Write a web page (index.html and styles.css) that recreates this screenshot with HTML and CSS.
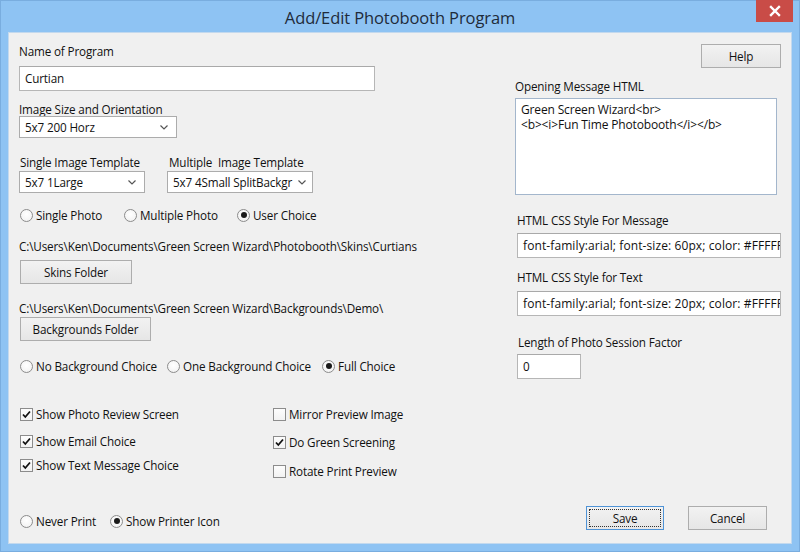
FILE: index.html
```html
<!DOCTYPE html>
<html>
<head>
<meta charset="utf-8">
<title>Add/Edit Photobooth Program</title>
<link rel="stylesheet" href="styles.css">
</head>
<body>
<div class="window">
  <div class="titlebar">
    <div class="title">Add/Edit Photobooth Program</div>
    <div class="close">
      <svg width="12" height="12" viewBox="0 0 12 12"><path d="M2 2 L10 10 M10 2 L2 10" stroke="#fff" stroke-width="2.4" stroke-linecap="square"/></svg>
    </div>
  </div>
  <div class="client">
    <div class="left">
      <div class="label">Name of Program</div>
      <div class="edit name-edit">Curtian</div>

      <div class="label lbl-size">Image Size and Orientation</div>
      <div class="combo combo-size"><span>5x7 200 Horz</span><svg class="chev" width="8" height="5" viewBox="0 0 8 5"><path d="M0.5 0.5 L4 4 L7.5 0.5" fill="none" stroke="#555" stroke-width="1.2"/></svg></div>

      <div class="templates">
        <div class="field f-single">
          <div class="label sub">Single Image Template</div>
          <div class="combo"><span>5x7 1Large</span><svg class="chev" width="8" height="5" viewBox="0 0 8 5"><path d="M0.5 0.5 L4 4 L7.5 0.5" fill="none" stroke="#555" stroke-width="1.2"/></svg></div>
        </div>
        <div class="field f-multi">
          <div class="label sub">Multiple&nbsp; Image Template</div>
          <div class="combo"><span>5x7 4Small SplitBackgr</span><svg class="chev" width="8" height="5" viewBox="0 0 8 5"><path d="M0.5 0.5 L4 4 L7.5 0.5" fill="none" stroke="#555" stroke-width="1.2"/></svg></div>
        </div>
      </div>

      <div class="radios r-photo">
        <div class="opt w104"><span class="radio"></span>Single Photo</div>
        <div class="opt w113"><span class="radio"></span>Multiple Photo</div>
        <div class="opt"><span class="radio on"></span>User Choice</div>
      </div>

      <div class="path p-skins">C:\Users\Ken\Documents\Green Screen Wizard\Photobooth\Skins\Curtians</div>
      <div class="btn b-skins">Skins Folder</div>

      <div class="path p-bg">C:\Users\Ken\Documents\Green Screen Wizard\Backgrounds\Demo\</div>
      <div class="btn b-bg">Backgrounds Folder</div>

      <div class="radios r-bg">
        <div class="opt w147"><span class="radio"></span>No Background Choice</div>
        <div class="opt w155"><span class="radio"></span>One Background Choice</div>
        <div class="opt"><span class="radio on"></span>Full Choice</div>
      </div>

      <div class="checks">
        <div class="ccol ccol-left">
          <div class="opt"><span class="check on"><svg width="11" height="11" viewBox="0 0 11 11"><path d="M2 5.5 L4.3 8 L9 2.5" fill="none" stroke="#111" stroke-width="1.8"/></svg></span>Show Photo Review Screen</div>
          <div class="opt c2"><span class="check on"><svg width="11" height="11" viewBox="0 0 11 11"><path d="M2 5.5 L4.3 8 L9 2.5" fill="none" stroke="#111" stroke-width="1.8"/></svg></span>Show Email Choice</div>
          <div class="opt c3"><span class="check on"><svg width="11" height="11" viewBox="0 0 11 11"><path d="M2 5.5 L4.3 8 L9 2.5" fill="none" stroke="#111" stroke-width="1.8"/></svg></span>Show Text Message Choice</div>
        </div>
        <div class="ccol ccol-right">
          <div class="opt"><span class="check"></span>Mirror Preview Image</div>
          <div class="opt c2r"><span class="check on"><svg width="11" height="11" viewBox="0 0 11 11"><path d="M2 5.5 L4.3 8 L9 2.5" fill="none" stroke="#111" stroke-width="1.8"/></svg></span>Do Green Screening</div>
          <div class="opt c3r"><span class="check"></span>Rotate Print Preview</div>
        </div>
      </div>

      <div class="radios r-print">
        <div class="opt w90"><span class="radio"></span>Never Print</div>
        <div class="opt"><span class="radio on"></span>Show Printer Icon</div>
      </div>
    </div>

    <div class="right">
      <div class="btn b-help">Help</div>
      <div class="label r-lbl1">Opening Message HTML</div>
      <div class="memo">Green Screen Wizard&lt;br&gt;<br>&lt;b&gt;&lt;i&gt;Fun Time Photobooth&lt;/i&gt;&lt;/b&gt;</div>
      <div class="label r-lbl2">HTML CSS Style For Message</div>
      <div class="edit css-edit e1">font-family:arial; font-size: 60px; color: #FFFFFF;</div>
      <div class="label r-lbl3">HTML CSS Style for Text</div>
      <div class="edit css-edit e2">font-family:arial; font-size: 20px; color: #FFFFFF;</div>
      <div class="label r-lbl4">Length of Photo Session Factor</div>
      <div class="edit small-edit">0</div>
      <div class="actions">
        <div class="btn b-save"><span class="focus">Save</span></div>
        <div class="btn b-cancel">Cancel</div>
      </div>
    </div>
  </div>
</div>
</body>
</html>
```

FILE: styles.css
```css
* { box-sizing: border-box; }

html, body {
  margin: 0;
  padding: 0;
  background: #8fc3f2;
}

body {
  font-family: "Open Sans", "Noto Sans", sans-serif;
  font-size: 11.7px;
  letter-spacing: -0.15px;
  color: #111;
}

.window {
  width: 800px;
  height: 552px;
  background: #8ec3f3;
  border: 1px solid #79addf;
  padding: 0 7px 7px 7px;
  display: flex;
  flex-direction: column;
}

.titlebar {
  flex: none;
  height: 31px;
  display: grid;
  grid-template-columns: 1fr auto 1fr;
  align-items: start;
}

.title {
  grid-column: 2;
  font-size: 16.5px;
  line-height: 20px;
  margin-top: 7px;
  color: #1f2b3a;
  letter-spacing: -0.1px;
}

.close {
  grid-column: 3;
  justify-self: end;
  width: 37px;
  height: 22px;
  margin-top: -1px;
  margin-right: -1px;
  background: #c94c47;
  display: flex;
  align-items: center;
  justify-content: center;
}

.client {
  flex: 1;
  min-height: 0;
  background: #f0f0f0;
  border: 1px solid #c3d9ee;
  padding: 11px 10px 13px 10px;
  display: grid;
  grid-template-columns: 496px 266px;
}

.left, .right {
  display: flex;
  flex-direction: column;
  align-items: flex-start;
}

.label {
  line-height: 14px;
  height: 14px;
  white-space: nowrap;
}

.edit {
  background: #fff;
  border: 1px solid #b6b6b6;
  border-top-color: #a9a9a9;
  height: 25px;
  line-height: 23px;
  padding: 0 5px;
  white-space: nowrap;
  overflow: hidden;
}

.name-edit { width: 356px; margin-top: 8px; }

.lbl-size { margin-top: 11px; }

.combo {
  background: #fff;
  border: 1px solid #acacac;
  height: 22px;
  display: flex;
  align-items: center;
  justify-content: space-between;
  padding: 0 8px 0 5px;
  white-space: nowrap;
}
.chev { flex: none; }

.combo-size { width: 158px; }

.templates {
  display: flex;
  gap: 22px;
  margin-top: 17px;
}
.field .combo { margin-top: 2px; }
.sub { padding-left: 1px; }
.f-single .combo { width: 126px; }
.f-multi .combo { width: 146px; padding-right: 6px; }
.f-multi .sub { padding-left: 2px; }

.radios {
  display: flex;
  margin-left: 1px;
}
.opt {
  display: flex;
  align-items: center;
  height: 16px;
  white-space: nowrap;
}
.w104 { width: 104px; }
.w113 { width: 113px; }
.w147 { width: 147px; }
.w155 { width: 155px; }
.w90 { width: 90px; }

.radio {
  width: 13px;
  height: 13px;
  border-radius: 50%;
  border: 1px solid #8c8c8c;
  background: radial-gradient(circle at 50% 40%, #fff 0%, #f4f4f4 70%, #e8e8e8 100%);
  margin-right: 3px;
  flex: none;
  display: flex;
  align-items: center;
  justify-content: center;
}
.radio.on::after {
  content: "";
  width: 6px;
  height: 6px;
  border-radius: 50%;
  background: #1a1a1a;
}

.check {
  width: 13px;
  height: 13px;
  border: 1px solid #8c8c8c;
  background: linear-gradient(#fdfdfd, #f2f2f2);
  margin-right: 3px;
  flex: none;
  display: flex;
  align-items: center;
  justify-content: center;
}

.r-photo { margin-top: 14px; }

.path {
  line-height: 14px;
  height: 14px;
  white-space: nowrap;
}
.p-skins { margin-top: 16px; }
.p-bg { margin-top: 17px; }

.btn {
  height: 24px;
  background: linear-gradient(#f2f2f2, #e6e6e6);
  border: 1px solid #adadad;
  display: flex;
  align-items: center;
  justify-content: center;
  white-space: nowrap;
}
.b-skins { width: 112px; margin-top: 7px; margin-left: 1px; }
.b-bg { width: 131px; margin-top: 2px; margin-left: 1px; }

.r-bg { margin-top: 17px; }

.checks {
  display: flex;
  margin-top: 32px;
  margin-left: 1px;
}
.ccol { display: flex; flex-direction: column; }
.ccol-left { width: 253px; }
.c2 { margin-top: 11px; }
.c3 { margin-top: 8px; }
.c2r { margin-top: 12px; }
.c3r { margin-top: 13px; }

.r-print { margin-top: 34px; }

/* right column */
.b-help { align-self: flex-end; width: 80px; }
.r-lbl1 { margin-top: 11px; }
.memo {
  margin-top: 5px;
  width: 262px;
  height: 97px;
  background: #fff;
  border: 1px solid #a3b6cc;
  padding: 3px 5px;
  line-height: 15px;
  font-size: 12px;
  white-space: nowrap;
}
.r-lbl2 { margin-top: 18px; padding-left: 2px; }
.css-edit {
  width: 264px;
  margin-left: 2px;
  padding-right: 0;
  font-size: 12px;
  letter-spacing: 0.1px;
}
.e1 { margin-top: 6px; }
.r-lbl3 { margin-top: 12px; padding-left: 2px; }
.e2 { margin-top: 7px; }
.r-lbl4 { margin-top: 19px; padding-left: 3px; }
.small-edit { width: 64px; margin-top: 5px; margin-left: 2px; }

.actions {
  margin-top: auto;
  align-self: stretch;
  display: flex;
  justify-content: flex-end;
  gap: 24px;
  padding-right: 14px;
}
.b-save {
  width: 78px;
  border-color: #4f93d6;
  padding: 2px;
}
.b-save .focus {
  flex: 1;
  align-self: stretch;
  border: 1px dotted #333;
  display: flex;
  align-items: center;
  justify-content: center;
}
.b-cancel { width: 79px; }
```
